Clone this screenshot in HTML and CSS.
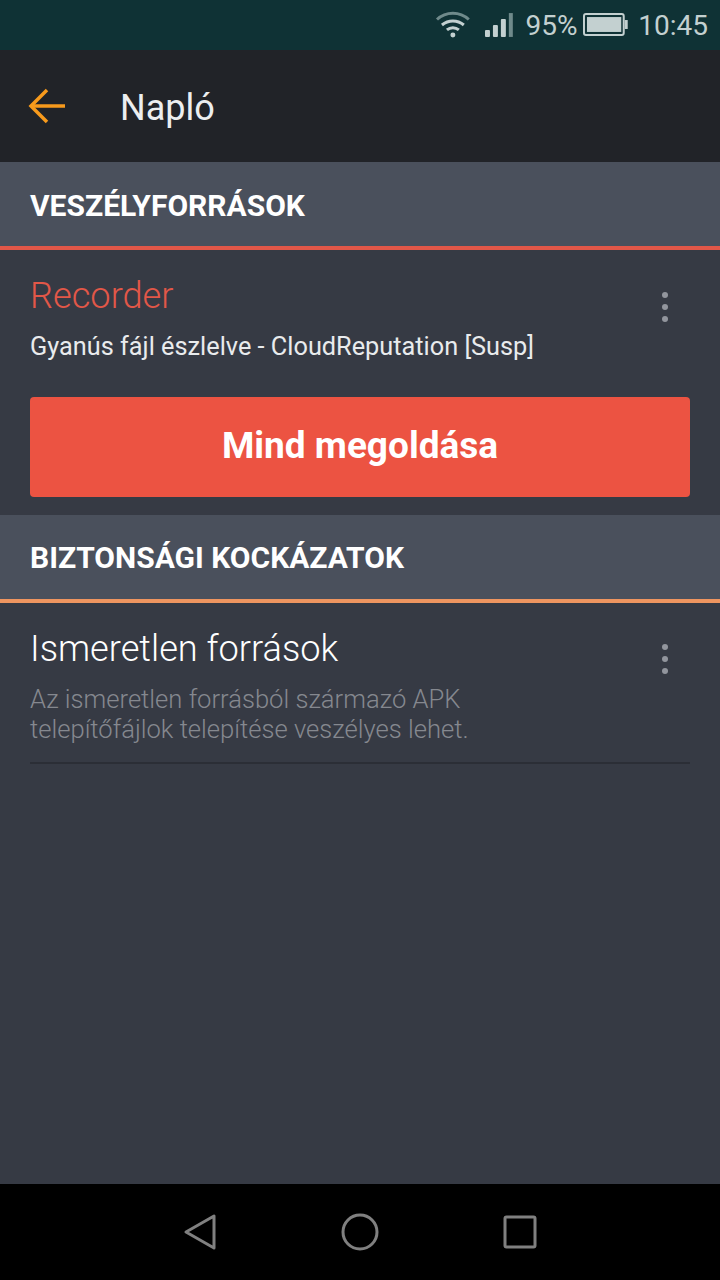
FILE: index.html
```html
<!DOCTYPE html>
<html lang="hu">
<head>
  <meta charset="UTF-8">
  <meta name="viewport" content="width=device-width, initial-scale=1.0">
  <title>Napló</title>
  <link rel="stylesheet" href="styles.css">
</head>
<body>
  <div class="status-bar">
    <svg class="wifi" width="36" height="28" viewBox="0 0 36 28" fill="none" stroke="#c3d0d0" stroke-width="3">
      <path d="M2 9.500C11 1 25 1 34 9.500" stroke="#6f8a8b"/>
      <path d="M7 15C13.500 9.500 22.500 9.500 29 15"/>
      <path d="M12 20C15.500 17 20.500 17 24 20"/>
      <circle cx="18" cy="25" r="2.500" fill="#c3d0d0" stroke="none"/>
    </svg>
    <svg class="signal" width="30" height="26" viewBox="0 0 30 26" fill="#c3d0d0">
      <rect x="1" y="18" width="5" height="7" rx="1"/>
      <rect x="9" y="13" width="5" height="12" rx="1"/>
      <rect x="17" y="7" width="5" height="18" rx="1"/>
      <rect x="25" y="1" width="4" height="24" fill="#6f8a8b"/>
    </svg>
    <span class="battery-text">95%</span>
    <svg class="battery" width="46" height="24" viewBox="0 0 46 24">
      <rect x="1" y="1" width="40" height="21" rx="2" fill="none" stroke="#c3d0d0" stroke-width="2"/>
      <rect x="4" y="4" width="34.500" height="15" fill="#c3d0d0"/>
      <rect x="42" y="7" width="3" height="9" fill="#c3d0d0"/>
    </svg>
    <span class="clock">10:45</span>
  </div>

  <header class="app-bar">
    <svg class="back" width="38" height="36" viewBox="0 0 38 36" fill="none" stroke="#f79a1c" stroke-width="3.500">
      <path d="M37 18H3"/>
      <path d="M19 2L3 18L19 34"/>
    </svg>
    <h1>Napló</h1>
  </header>

  <main class="content">
    <h2 class="section-head red">VESZÉLYFORRÁSOK</h2>
    <div class="threat">
      <div class="threat-text">
        <div class="threat-title red-text">Recorder</div>
        <div class="threat-sub">Gyanús fájl észlelve - CloudReputation [Susp]</div>
      </div>
      <div class="dots"><i></i><i></i><i></i></div>
    </div>
    <div class="btn-wrap">
      <button class="fix-btn">Mind megoldása</button>
    </div>

    <h2 class="section-head orange">BIZTONSÁGI KOCKÁZATOK</h2>
    <div class="risk">
      <div class="threat-text">
        <div class="threat-title">Ismeretlen források</div>
        <p class="risk-desc">Az ismeretlen forrásból származó APK<br>telepítőfájlok telepítése veszélyes lehet.</p>
      </div>
      <div class="dots"><i></i><i></i><i></i></div>
    </div>
  </main>

  <nav class="nav-bar">
    <svg width="34" height="38" viewBox="0 0 34 38" fill="none" stroke="#808080" stroke-width="3" stroke-linejoin="round">
      <path d="M31 3V35L3 19Z"/>
    </svg>
    <svg width="38" height="38" viewBox="0 0 38 38" fill="none" stroke="#808080" stroke-width="3">
      <circle cx="19" cy="19" r="17"/>
    </svg>
    <svg width="34" height="34" viewBox="0 0 34 34" fill="none" stroke="#808080" stroke-width="3" stroke-linejoin="round">
      <rect x="2" y="2" width="30" height="30" rx="1.500"/>
    </svg>
  </nav>
</body>
</html>
```

FILE: styles.css
```css
* {
  box-sizing: border-box;
}

body {
  margin: 0;
  width: 720px;
  height: 1280px;
  display: flex;
  flex-direction: column;
  font-family: Roboto, sans-serif;
  background-color: #363a44;
  overflow: hidden;
}

.status-bar {
  height: 50px;
  flex: none;
  display: flex;
  align-items: center;
  padding: 0 12px 0 435px;
  background-color: #0f3235;
  color: #c3d0d0;
  font-size: 28px;
}
.wifi {
  margin-bottom: 3px;
}
.signal {
  margin-left: 13px;
}
.battery-text {
  margin-left: 12px;
}
.battery {
  margin-left: 5px;
}
.clock {
  margin-left: 10px;
}

.app-bar {
  height: 112px;
  flex: none;
  display: flex;
  align-items: center;
  padding-left: 28px;
  background-color: #212328;
}
.app-bar h1 {
  margin: 4px 0 0 54px;
  font-size: 36px;
  font-weight: 400;
  color: #eceef0;
}

.content {
  flex: 1;
}

.section-head {
  height: 88px;
  margin: 0;
  padding-left: 30px;
  display: flex;
  align-items: center;
  font-size: 30px;
  font-weight: 700;
  color: #fff;
  background-color: #4a505c;
  border-bottom: 4px solid;
}
.section-head.red {
  padding-top: 2px;
  border-color: #e25748;
}
.section-head.orange {
  border-color: #ee9560;
}

.threat, .risk {
  display: flex;
  justify-content: space-between;
  margin: 0 30px;
  padding-top: 25px;
}
.threat {
  height: 147px;
}
.risk {
  height: 161px;
  border-bottom: 2px solid #2b2e36;
}

.threat-title {
  font-size: 36.200px;
  line-height: 42px;
  font-weight: 300;
  color: #fff;
}
.red-text {
  color: #e25748;
}
.threat-sub {
  margin-top: 14px;
  font-size: 25.300px;
  line-height: 32px;
  color: #e9ebed;
}
.risk-desc {
  margin: 14px 0 0;
  font-size: 25.600px;
  line-height: 30px;
  font-weight: 300;
  color: #85888f;
}

.dots {
  width: 6px;
  margin: 17px 22px 0 0;
  display: flex;
  flex-direction: column;
  gap: 6px;
}
.risk .dots {
  margin-top: 16px;
}
.dots i {
  width: 6px;
  height: 6px;
  border-radius: 50%;
  background-color: #92959d;
}

.btn-wrap {
  padding: 0 30px;
}
.fix-btn {
  display: block;
  width: 100%;
  height: 100px;
  margin-bottom: 18px;
  padding-bottom: 4px;
  border: none;
  border-radius: 4px;
  background-color: #ec5342;
  color: #fff;
  font-family: Roboto, sans-serif;
  font-size: 37px;
  font-weight: 700;
}

.nav-bar {
  height: 96px;
  flex: none;
  display: flex;
  align-items: center;
  justify-content: center;
  gap: 124px;
  background-color: #000;
}
```
